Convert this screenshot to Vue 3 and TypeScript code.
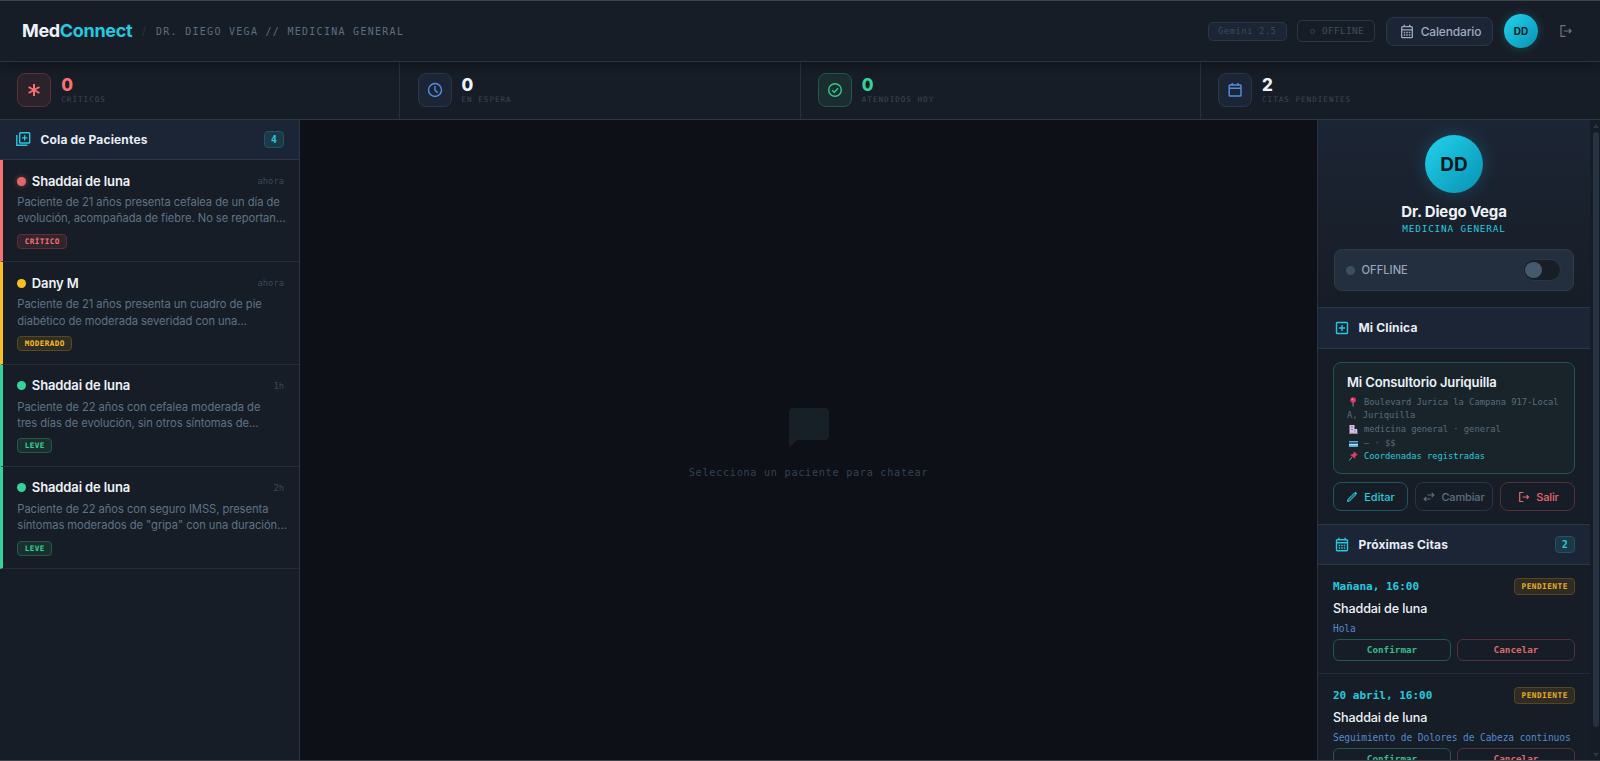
<script setup lang="ts">
type Tone = 'red' | 'blue' | 'green' | 'yellow'

interface Stat { value: number; label: string; tone: Tone; icon: 'asterisk' | 'clock' | 'check' | 'calendar' }
interface Patient { name: string; time: string; summary: string[]; level: string; tone: Tone }
interface Appointment { date: string; name: string; reason: string }

const stats: Stat[] = [
  { value: 0, label: 'CRÍTICOS', tone: 'red', icon: 'asterisk' },
  { value: 0, label: 'EN ESPERA', tone: 'blue', icon: 'clock' },
  { value: 0, label: 'ATENDIDOS HOY', tone: 'green', icon: 'check' },
  { value: 2, label: 'CITAS PENDIENTES', tone: 'blue', icon: 'calendar' },
]

const patients: Patient[] = [
  { name: 'Shaddai de luna', time: 'ahora', summary: ['Paciente de 21 años presenta cefalea de un día de', 'evolución, acompañada de fiebre. No se reportan…'], level: 'CRÍTICO', tone: 'red' },
  { name: 'Dany M', time: 'ahora', summary: ['Paciente de 21 años presenta un cuadro de pie', 'diabético de moderada severidad con una…'], level: 'MODERADO', tone: 'yellow' },
  { name: 'Shaddai de luna', time: '1h', summary: ['Paciente de 22 años con cefalea moderada de', 'tres días de evolución, sin otros síntomas de…'], level: 'LEVE', tone: 'green' },
  { name: 'Shaddai de luna', time: '2h', summary: ['Paciente de 22 años con seguro IMSS, presenta', 'síntomas moderados de "gripa" con una duración…'], level: 'LEVE', tone: 'green' },
]

const appointments: Appointment[] = [
  { date: 'Mañana, 16:00', name: 'Shaddai de luna', reason: 'Hola' },
  { date: '20 abril, 16:00', name: 'Shaddai de luna', reason: 'Seguimiento de Dolores de Cabeza continuos' },
]
</script>

<template>
  <div class="app">
    <header class="topbar">
      <div class="logo">Med<span>Connect</span></div>
      <span class="slash">/</span>
      <span class="crumb">DR. DIEGO VEGA // MEDICINA GENERAL</span>
      <div class="actions">
        <span class="model">Gemini 2.5</span>
        <span class="status"><i></i>OFFLINE</span>
        <button class="calendar-btn">
          <svg width="14" height="15" viewBox="0 0 14 15" fill="none" stroke="currentColor" stroke-width="1.3"><rect x="1.7" y="2.7" width="10.6" height="11" rx="1" /><path d="M1.7 5.8h10.6M4.3 .7v2M9.7 .7v2" /><path d="M3.8 8.5h6.6M3.8 11h6.6" stroke-dasharray="1.5 1" /></svg>
          Calendario
        </button>
        <span class="avatar small">DD</span>
        <svg class="exit" width="14" height="14" viewBox="0 0 14 14" fill="none" stroke="currentColor" stroke-width="1.2"><path d="M6.5 1.7H2v10.6h4.500M5 7h7M9.900 4.800 12.100 7 9.900 9.200" /></svg>
      </div>
    </header>

    <section class="stats">
      <div v-for="s in stats" :key="s.label" class="stat" :class="s.tone">
        <span class="stat-icon">
          <svg width="18" height="18" viewBox="0 0 18 18" fill="none" stroke="currentColor" stroke-width="1.4">
            <path v-if="s.icon === 'asterisk'" d="M9 3v12M3.6 6l10.8 6M14.4 6 3.6 12" stroke-width="2" />
            <template v-else-if="s.icon === 'clock'"><circle cx="9" cy="9" r="6.5" /><path d="M9 5v4.2l2.7 2.6" /></template>
            <template v-else-if="s.icon === 'check'"><circle cx="9" cy="9" r="6.3" /><path d="m6.2 9.2 2 2 3.8-4" /></template>
            <template v-else><rect x="3.2" y="4" width="11.8" height="11" rx=".8" /><path d="M3.2 7.3H15M6.2 2v2M12 2v2" /></template>
          </svg>
        </span>
        <div>
          <div class="stat-value">{{ s.value }}</div>
          <div class="stat-label">{{ s.label }}</div>
        </div>
      </div>
    </section>

    <div class="body">
      <aside class="queue">
        <div class="section-head queue-head">
          <svg width="15" height="15" viewBox="0 0 15 15" fill="none" stroke="currentColor" stroke-width="1.4"><rect x="3.7" y=".7" width="10" height="10.3" rx=".8" /><path d="M.8 3v10.2h10.6M8.7 3.2v5.4M6 5.9h5.4" /></svg>
          <h2>Cola de Pacientes</h2>
          <span class="count">4</span>
        </div>
        <article v-for="(p, i) in patients" :key="i" class="patient" :class="p.tone">
          <div class="patient-top">
            <i class="dot"></i>
            <strong>{{ p.name }}</strong>
            <time>{{ p.time }}</time>
          </div>
          <p><span v-for="line in p.summary" :key="line">{{ line }}</span></p>
          <span class="level">{{ p.level }}</span>
        </article>
      </aside>

      <main class="chat">
        <svg width="48" height="48" viewBox="0 0 24 24" fill="#182027"><path d="M20 2H4c-1.1 0-2 .9-2 2v18l4-4h14c1.1 0 2-.9 2-2V4c0-1.1-.9-2-2-2z" /></svg>
        <p>Selecciona un paciente para chatear</p>
      </main>

      <aside class="side">
        <div class="side-content">
          <div class="profile">
            <span class="avatar large">DD</span>
            <h1>Dr. Diego Vega</h1>
            <div class="specialty">MEDICINA GENERAL</div>
            <div class="availability">
              <i></i><span>OFFLINE</span>
              <div class="switch"><b></b></div>
            </div>
          </div>

          <div class="section-head clinic-head">
            <svg width="14" height="14" viewBox="0 0 14 14" fill="none" stroke="currentColor" stroke-width="1.4"><rect x="1.5" y="1.5" width="11" height="11" rx=".8" /><path d="M7 4v6M4 7h6" /></svg>
            <h2>Mi Clínica</h2>
          </div>
          <div class="clinic">
            <div class="clinic-card">
              <h3>Mi Consultorio Juriquilla</h3>
              <div class="line">
                <svg width="12" height="10" viewBox="0 0 12 10"><path d="M5.6 5h1v4.5h-1z" fill="#8297a5" /><circle cx="6.1" cy="3" r="2.8" fill="#e33b64" /><circle cx="5.3" cy="2.2" r=".8" fill="#f58aa4" /></svg>
                Boulevard Jurica la Campana 917-Local
              </div>
              <div class="line">A, Juriquilla</div>
              <div class="line">
                <svg width="12" height="10" viewBox="0 0 12 10"><path d="M2.5 1h5v4h2.8v4.5H2.5z" fill="#d5c3e6" /><path d="M4 2.2h2v1.3H4zM4 5h2v1H4zM7 6.5h2v1H7z" fill="#9f72b5" /><path d="M2 8.8h8.8v1H2z" fill="#ad80a5" /></svg>
                medicina general · general
              </div>
              <div class="line">
                <svg width="12" height="10" viewBox="0 0 12 10"><path d="M2 3h9v6H2z" fill="#4daee0" /><path d="M2 4.2h9v1.6H2z" fill="#26506c" /><path d="M2 6h9v1.3H2z" fill="#b8dfeb" /></svg>
                — · $$
              </div>
              <div class="line coords">
                <svg width="12" height="10" viewBox="0 0 12 10"><path d="m5 6-2.6 3.5" stroke="#8297a5" /><path d="m6.7.3 4 3.5-1.2.5-1.3 1.5v2L3 3.7l2.6-.4 1.2-1.5z" fill="#e33b64" /></svg>
                Coordenadas registradas
              </div>
            </div>
            <div class="clinic-actions">
              <button class="edit"><svg width="12" height="12" viewBox="0 0 12 12" fill="none" stroke="currentColor" stroke-linejoin="round"><path d="M1.5 10.5 2 8.400l6.400-6.400 1.600 1.600-6.400 6.400z" fill="currentColor" fill-opacity=".45" /><path d="m9 1.400 1.600 1.600" stroke-width="1.600" /></svg>Editar</button>
              <button class="swap"><svg width="12" height="12" viewBox="0 0 12 12" fill="none" stroke="currentColor" stroke-width="1.1"><path d="M4.5 4h6.3M8.7 1.8 10.9 4 8.7 6.2M7.5 8H1.2M3.3 5.8 1.1 8l2.2 2.2" /></svg>Cambiar</button>
              <button class="leave"><svg width="12" height="12" viewBox="0 0 12 12" fill="none" stroke="currentColor" stroke-width="1.2"><path d="M5.300 1.500H1.700v9h3.600M4.500 6h6M8.700 4.200l1.800 1.800-1.800 1.800" /></svg>Salir</button>
            </div>
          </div>

          <div class="section-head dates-head">
            <svg width="14" height="15" viewBox="0 0 14 15" fill="none" stroke="currentColor" stroke-width="1.4"><rect x="1.5" y="2.7" width="11" height="11" rx="1" /><path d="M1.5 5.8h11M4 .7v2M10 .7v2" /><path d="M3.7 8.5h6.7M3.7 11h6.7" stroke-dasharray="1.5 1" /></svg>
            <h2>Próximas Citas</h2>
            <span class="count">2</span>
          </div>
          <article v-for="a in appointments" :key="a.date" class="appointment">
            <div class="appointment-top"><time>{{ a.date }}</time><span>PENDIENTE</span></div>
            <div class="appointment-name">{{ a.name }}</div>
            <div class="reason">{{ a.reason }}</div>
            <div class="appointment-actions"><button class="ok">Confirmar</button><button class="cancel">Cancelar</button></div>
          </article>
        </div>
        <div class="scrollbar"><i class="up"></i><b></b><i class="down"></i></div>
      </aside>
    </div>
  </div>
</template>

<style>
body { background: #0d1017; overflow: hidden; }
</style>

<style scoped>
* { box-sizing: border-box; }
.app {
  --mono: 'DejaVu Sans Mono', monospace;
  --line: #273340;
  --panel: #171d26;
  --cyan: #25c9df;
  height: 761px; display: flex; flex-direction: column; overflow: hidden;
  background: #0d1017; color: #edf2f8; font-family: Inter, sans-serif;
  border-top: 1px solid #404347; border-bottom: 1px solid #41414a;
}
h1, h2, h3, p { margin: 0; }
svg { flex: none; display: block; }
button { background: none; padding: 0; font-family: inherit; display: flex; align-items: center; justify-content: center; white-space: nowrap; }

.topbar { height: 61px; flex: none; display: flex; align-items: center; padding: 0 27px 0 22px; background: var(--panel); border-bottom: 1px solid #2a3442; box-shadow: 0 2px 10px #0005; z-index: 1; }
.logo { font-size: 18px; font-weight: 700; letter-spacing: -.33px; line-height: 20px; width: 112px; white-space: nowrap; }
.logo span { color: var(--cyan); }
.slash { color: #2b3542; font-size: 11px; margin-left: 8px; width: 14px; }
.crumb { font-family: var(--mono); font-size: 10px; letter-spacing: 1.28px; color: #5b6e80; }
.actions { margin-left: auto; display: flex; align-items: center; }
.model { width: 79px; height: 19px; border: 1px solid #2a3747; border-radius: 5px; background: #1c2535; color: #3c4a5b; font: 8.8px/17px var(--mono); letter-spacing: .55px; padding-left: 9px; margin-right: 10px; }
.status { width: 78px; height: 22px; border: 1px solid #2b3643; border-radius: 5px; color: #3f4e5e; font: 9.4px/20px var(--mono); letter-spacing: .36px; display: flex; align-items: center; padding-left: 12px; margin-right: 11px; }
.status i { width: 5px; height: 5px; border: 1px solid #344352; border-radius: 50%; margin-right: 7px; }
.calendar-btn { width: 107px; height: 29px; border: 1px solid #2b3748; border-radius: 8px; background: #1c2535; color: #9eacc0; font-size: 12px; font-weight: 500; letter-spacing: -.17px; gap: 7px; padding-left: 2px; margin-right: 11px; }
.avatar { border-radius: 50%; display: flex; align-items: center; justify-content: center; font-weight: 700; color: #071923; background: linear-gradient(135deg, #22d3ee, #0891b2); }
.small { width: 34px; height: 34px; font-size: 10px; letter-spacing: .1px; box-shadow: 0 0 10px #22d3ee40; }
.exit { color: #66788a; margin-left: 21px; }

.stats { height: 58px; flex: none; display: grid; grid-template-columns: repeat(4, 1fr); gap: 1px; background: #253140; border-bottom: 1px solid #2a3744; }
.stat { background: var(--panel); display: flex; align-items: flex-start; padding: 11px 17px 0 17.3px; gap: 10px; }
.stat-icon { width: 34px; height: 34px; border-radius: 8px; border: 1px solid #2a374b; background: #1c2536; display: flex; align-items: center; justify-content: center; color: #5290df; }
.red .stat-icon { color: #f87171; background: #2c222a; border-color: #583239; }
.green .stat-icon { color: #34c98e; background: #1a2d30; border-color: #22584c; }
.stat-value { font-size: 17px; font-weight: 800; line-height: 22px; padding-top: 1px; }
.red .stat-value { color: #f87171; }
.green .stat-value { color: #34d399; }
.stat-label { font: 7.6px/8px var(--mono); letter-spacing: 1px; color: #3a4857; }

.body { flex: 1; min-height: 0; display: flex; }
.section-head { display: flex; align-items: center; background: #1c2536; border-bottom: 1px solid #293747; color: var(--cyan); }
.section-head h2 { font-size: 12px; line-height: 16px; font-weight: 700; letter-spacing: .15px; color: #e8eef6; }
.count { margin-left: auto; width: 20px; height: 17px; border: 1px solid #1d5563; border-radius: 4px; background: #1b3946; color: #2acbe1; font: bold 9.6px/16px var(--mono); text-align: center; }

.queue { width: 300px; flex: none; background: var(--panel); border-right: 1px solid #293644; }
.queue-head { height: 40px; padding: 0 15px 0 16px; }
.queue-head h2 { margin-left: 9.5px; }
.patient { height: 102.33px; padding: 12.5px 15px 0 14.3px; border-left: 3px solid var(--tone); border-bottom: 1px solid #222d38; }
.patient.red { --tone: #f87171; --fill: #30252d; --edge: #5a3139; }
.patient.yellow { --tone: #fbbf24; --fill: #302d25; --edge: #574920; }
.patient.green { --tone: #34d399; --fill: #1a302f; --edge: #25594c; }
.patient-top { display: flex; align-items: center; height: 17px; }
.dot { width: 9px; height: 9px; border-radius: 50%; background: var(--tone); margin-right: 5.5px; }
.red .dot { background: #df686b; box-shadow: 0 0 5px #f8717180; }
.patient strong { font-size: 13px; line-height: 17px; font-weight: 600; letter-spacing: -.12px; }
.patient time { margin-left: auto; font: 8.8px/14px var(--mono); color: #3b4957; }
.patient p { font-size: 11.2px; line-height: 16.4px; letter-spacing: -.06px; color: #5e7285; margin-top: 4.5px; white-space: nowrap; }
.patient p span { display: block; }
.level { display: inline-block; height: 15px; margin-top: 7px; padding: 0 6.5px; border: 1px solid var(--edge); border-radius: 4px; background: var(--fill); color: var(--tone); font: bold 7.6px/14px var(--mono); letter-spacing: .42px; vertical-align: top; }

.chat { flex: 1; display: flex; flex-direction: column; align-items: center; justify-content: center; }
.chat p { font: 10.2px/14px var(--mono); letter-spacing: .71px; color: #354351; margin-top: 14px; }
.chat svg { margin-top: 3px; }

.side { width: 283px; flex: none; display: flex; background: var(--panel); border-left: 1px solid #273340; overflow: hidden; }
.side-content { width: 272px; height: 100%; overflow: hidden; }
.profile { height: 188px; padding: 15px 16px 0; display: flex; flex-direction: column; align-items: center; background: linear-gradient(180deg, #1c2535, #171d26); border-bottom: 1px solid #293747; }
.large { width: 58px; height: 58px; flex: none; font-size: 19px; letter-spacing: .1px; box-shadow: 0 0 18px #22d3ee35; }
.profile h1 { font-size: 15px; line-height: 20px; font-weight: 700; letter-spacing: -.15px; margin-top: 9px; }
.specialty { font: 9.4px/12px var(--mono); letter-spacing: .82px; color: var(--cyan); margin-top: 1px; }
.availability { width: 240px; height: 42px; margin-top: 14px; border: 1px solid #2c3a4a; border-radius: 8px; background: #232e3e; display: flex; align-items: center; padding: 0 12px 0 11px; color: #96a6ba; font-size: 11.2px; font-weight: 500; }
.availability i { width: 9px; height: 9px; border-radius: 50%; background: #3d5062; margin-right: 6.5px; }
.switch { width: 38px; height: 22px; border-radius: 11px; margin-left: auto; border: 1px solid #2a3746; background: #171e27; padding: 2px 1px; }
.switch b { display: block; width: 17px; height: 16px; border-radius: 50%; background: #455a6d; }

.side .section-head { padding: 0 15px 0 17px; }
.clinic-head { height: 41px; }
.side h2 { margin-left: 9.5px; }
.clinic { height: 176px; padding: 13px 15px 0; border-bottom: 1px solid #293747; }
.clinic-card { height: 112px; border: 1px solid #24534f; border-radius: 8px; background: #19242a; padding: 10.5px 13px 0; }
.clinic-card h3 { font-size: 13px; font-weight: 600; line-height: 17px; letter-spacing: -.14px; margin-bottom: 4.5px; white-space: nowrap; }
.line { height: 13.6px; display: flex; align-items: center; gap: 5px; font: 8.8px/14px var(--mono); letter-spacing: -.04px; color: #586c7b; white-space: nowrap; }
.coords { color: var(--cyan); }
.clinic-actions { display: grid; grid-template-columns: 75px 78px 75px; gap: 7px; margin-top: 8px; }
.clinic-actions button { height: 29px; border: 1px solid; border-radius: 8px; font-size: 11px; font-weight: 500; gap: 6px; }
.clinic-actions .edit { color: var(--cyan); border-color: #1e5661; }
.clinic-actions .swap { color: #5b6e80; border-color: #293644; letter-spacing: -.15px; }
.clinic-actions .leave { color: #e8676c; border-color: #52313a; letter-spacing: -.15px; padding-left: 2px; }

.dates-head { height: 40px; }
.appointment { height: 109.2px; padding: 12.5px 15px 0; border-bottom: 1px solid #202b35; }
.appointment-top { display: flex; justify-content: space-between; align-items: center; height: 17px; }
.appointment-top time { font: bold 11px/15px var(--mono); color: var(--cyan); }
.appointment-top span { width: 61px; height: 17px; border: 1px solid #54471f; border-radius: 4px; background: #302c24; color: #e4ad29; font: bold 7.8px/16px var(--mono); letter-spacing: .45px; padding-left: 6.5px; }
.appointment-name { font-size: 12.6px; font-weight: 500; letter-spacing: -.13px; line-height: 17px; margin-top: 5.5px; }
.reason { font: 9.6px/13px var(--mono); letter-spacing: -.12px; color: #5288cf; margin-top: 4.5px; white-space: nowrap; }
.appointment-actions { display: grid; grid-template-columns: 1fr 1fr; gap: 6px; margin-top: 4.5px; }
.appointment-actions button { height: 22px; border: 1px solid; border-radius: 6px; font: bold 9.3px/20px var(--mono); }
.appointment-actions .ok { color: #34bd89; border-color: #24574c; }
.appointment-actions .cancel { color: #dd686e; border-color: #52313a; }

.scrollbar { width: 10px; background: #161c25; display: flex; flex-direction: column; align-items: center; padding: 4px 0 3px 1px; }
.scrollbar b { width: 6px; height: 595px; border-radius: 3px; background: #263241; margin: 4px 0 auto; }
.scrollbar i { border: 3px solid transparent; }
.scrollbar .up { border-top: 0; border-bottom: 4px solid #2b3745; }
.scrollbar .down { border-bottom: 0; border-top: 4px solid #2b3745; }
</style>
